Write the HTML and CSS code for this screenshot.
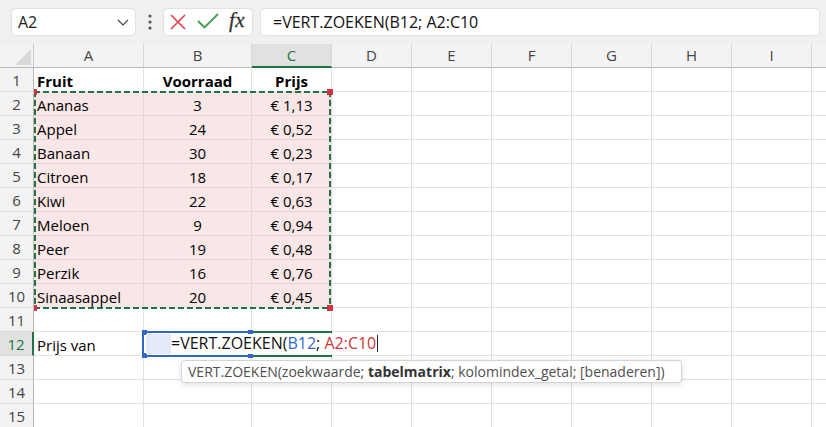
FILE: index.html
```html
<!DOCTYPE html>
<html>
<head>
<meta charset="utf-8">
<link rel="stylesheet" href="styles.css">
</head>
<body>
<div class="app">
  <div class="toolbar">
    <div class="namebox">
      <span class="nb-text">A2</span>
      <svg class="chev" width="12" height="7" viewBox="0 0 12 7"><polyline points="1,1 6,6 11,1" fill="none" stroke="#444" stroke-width="1.2"/></svg>
    </div>
    <svg class="dots" width="4" height="16" viewBox="0 0 4 16"><circle cx="2" cy="2" r="1.6" fill="#555"/><circle cx="2" cy="8" r="1.6" fill="#555"/><circle cx="2" cy="14" r="1.6" fill="#555"/></svg>
    <div class="fxbox">
      <svg class="ico-x" width="16" height="16" viewBox="0 0 16 16"><path d="M1 1 L15 15 M15 1 L1 15" stroke="#e3434b" stroke-width="1.7" fill="none"/></svg>
      <svg class="ico-ok" width="22" height="16" viewBox="0 0 22 16"><polyline points="1,8 7.5,14.5 21,1" fill="none" stroke="#3f9f4f" stroke-width="1.8"/></svg>
      <span class="fx">fx</span>
    </div>
    <div class="formula">=VERT.ZOEKEN(B12; A2:C10</div>
  </div>

  <div class="sheet">
    <div class="row hdr">
      <div class="corner"><svg width="16" height="16" viewBox="0 0 16 16"><polygon points="16,0 16,16 0,16" fill="#d9d9d9"/></svg></div>
      <div class="h ca">A</div><div class="h cb">B</div><div class="h cc sel">C</div>
      <div class="h c">D</div><div class="h c">E</div><div class="h c">F</div><div class="h c">G</div><div class="h c">H</div><div class="h c">I</div><div class="h c"></div>
    </div>

    <div class="row"><div class="rh">1</div><div class="cell ca bold">Fruit</div><div class="cell cb bold mid">Voorraad</div><div class="cell cc bold mid">Prijs</div><div class="cell c"></div><div class="cell c"></div><div class="cell c"></div><div class="cell c"></div><div class="cell c"></div><div class="cell c"></div><div class="cell c"></div></div>
    <div class="row"><div class="rh">2</div><div class="cell ca pk">Ananas</div><div class="cell cb pk mid">3</div><div class="cell cc pk mid">€ 1,13</div><div class="cell c"></div><div class="cell c"></div><div class="cell c"></div><div class="cell c"></div><div class="cell c"></div><div class="cell c"></div><div class="cell c"></div></div>
    <div class="row"><div class="rh">3</div><div class="cell ca pk">Appel</div><div class="cell cb pk mid">24</div><div class="cell cc pk mid">€ 0,52</div><div class="cell c"></div><div class="cell c"></div><div class="cell c"></div><div class="cell c"></div><div class="cell c"></div><div class="cell c"></div><div class="cell c"></div></div>
    <div class="row"><div class="rh">4</div><div class="cell ca pk">Banaan</div><div class="cell cb pk mid">30</div><div class="cell cc pk mid">€ 0,23</div><div class="cell c"></div><div class="cell c"></div><div class="cell c"></div><div class="cell c"></div><div class="cell c"></div><div class="cell c"></div><div class="cell c"></div></div>
    <div class="row"><div class="rh">5</div><div class="cell ca pk">Citroen</div><div class="cell cb pk mid">18</div><div class="cell cc pk mid">€ 0,17</div><div class="cell c"></div><div class="cell c"></div><div class="cell c"></div><div class="cell c"></div><div class="cell c"></div><div class="cell c"></div><div class="cell c"></div></div>
    <div class="row"><div class="rh">6</div><div class="cell ca pk">Kiwi</div><div class="cell cb pk mid">22</div><div class="cell cc pk mid">€ 0,63</div><div class="cell c"></div><div class="cell c"></div><div class="cell c"></div><div class="cell c"></div><div class="cell c"></div><div class="cell c"></div><div class="cell c"></div></div>
    <div class="row"><div class="rh">7</div><div class="cell ca pk">Meloen</div><div class="cell cb pk mid">9</div><div class="cell cc pk mid">€ 0,94</div><div class="cell c"></div><div class="cell c"></div><div class="cell c"></div><div class="cell c"></div><div class="cell c"></div><div class="cell c"></div><div class="cell c"></div></div>
    <div class="row"><div class="rh">8</div><div class="cell ca pk">Peer</div><div class="cell cb pk mid">19</div><div class="cell cc pk mid">€ 0,48</div><div class="cell c"></div><div class="cell c"></div><div class="cell c"></div><div class="cell c"></div><div class="cell c"></div><div class="cell c"></div><div class="cell c"></div></div>
    <div class="row"><div class="rh">9</div><div class="cell ca pk">Perzik</div><div class="cell cb pk mid">16</div><div class="cell cc pk mid">€ 0,76</div><div class="cell c"></div><div class="cell c"></div><div class="cell c"></div><div class="cell c"></div><div class="cell c"></div><div class="cell c"></div><div class="cell c"></div></div>
    <div class="row"><div class="rh">10</div><div class="cell ca pk">Sinaasappel</div><div class="cell cb pk mid">20</div><div class="cell cc pk mid">€ 0,45</div><div class="cell c"></div><div class="cell c"></div><div class="cell c"></div><div class="cell c"></div><div class="cell c"></div><div class="cell c"></div><div class="cell c"></div></div>
    <div class="row"><div class="rh">11</div><div class="cell ca"></div><div class="cell cb"></div><div class="cell cc"></div><div class="cell c"></div><div class="cell c"></div><div class="cell c"></div><div class="cell c"></div><div class="cell c"></div><div class="cell c"></div><div class="cell c"></div></div>
    <div class="row"><div class="rh rsel">12</div><div class="cell ca">Prijs van</div><div class="cell cb"></div><div class="cell cc"></div><div class="cell c"></div><div class="cell c"></div><div class="cell c"></div><div class="cell c"></div><div class="cell c"></div><div class="cell c"></div><div class="cell c"></div></div>
    <div class="row"><div class="rh">13</div><div class="cell ca"></div><div class="cell cb"></div><div class="cell cc"></div><div class="cell c"></div><div class="cell c"></div><div class="cell c"></div><div class="cell c"></div><div class="cell c"></div><div class="cell c"></div><div class="cell c"></div></div>
    <div class="row"><div class="rh">14</div><div class="cell ca"></div><div class="cell cb"></div><div class="cell cc"></div><div class="cell c"></div><div class="cell c"></div><div class="cell c"></div><div class="cell c"></div><div class="cell c"></div><div class="cell c"></div><div class="cell c"></div></div>
    <div class="row"><div class="rh">15</div><div class="cell ca"></div><div class="cell cb"></div><div class="cell cc"></div><div class="cell c"></div><div class="cell c"></div><div class="cell c"></div><div class="cell c"></div><div class="cell c"></div><div class="cell c"></div><div class="cell c"></div></div>

    <!-- overlays -->
    <div class="ants"></div>
    <div class="rq rq-tl"></div><div class="rq rq-tr"></div><div class="rq rq-bl"></div><div class="rq rq-br"></div>

    <div class="edit-green"></div>
    <div class="bluebox"></div>
    <div class="bq bq-tl"></div><div class="bq bq-tr"></div><div class="bq bq-bl"></div><div class="bq bq-br"></div>
    <div class="lav"></div>
    <div class="editor">=VERT.ZOEKEN(<span class="ref-b">B12</span>; <span class="ref-r">A2:C10</span><span class="caret"></span></div>

    <div class="tip">VERT.ZOEKEN(zoekwaarde; <b>tabelmatrix</b>; kolomindex_getal; [benaderen])</div>
  </div>
</div>
</body>
</html>
```

FILE: styles.css
```css
* { box-sizing: border-box; }
html, body { margin: 0; padding: 0; }
body {
  width: 826px;
  height: 427px;
  overflow: hidden;
  background: #ffffff;
  font-family: "Open Sans", "Noto Sans", sans-serif;
  color: #000;
}
.app { width: 826px; height: 427px; overflow: hidden; }

/* toolbar */
.toolbar {
  height: 44px;
  background: #f0f0f0;
  display: flex;
  align-items: flex-start;
  padding-top: 8px;
  padding-left: 11px;
}
.namebox {
  width: 125px;
  height: 28px;
  background: #fff;
  border: 1px solid #e2e2e2;
  border-radius: 5px;
  display: flex;
  align-items: center;
  justify-content: space-between;
  padding: 0 6px 0 6px;
}
.nb-text { font-size: 16px; color: #222; }
.chev { margin-top: 1px; }
.dots { margin: 6px 0 0 12px; }
.fxbox {
  margin-left: 11px;
  width: 90px;
  height: 28px;
  background: #fff;
  border: 1px solid #e2e2e2;
  border-radius: 5px;
  display: flex;
  align-items: center;
  padding-left: 6px;
}
.ico-ok { margin-left: 11px; margin-top: -3px; }
.fx {
  font-family: "Liberation Serif", serif;
  font-style: italic;
  font-size: 21px;
  color: #333;
  margin-left: 10px;
  margin-top: -3px;
  letter-spacing: 0.5px;
  -webkit-text-stroke: 0.3px #333;
}
.formula {
  margin-left: 7px;
  width: 560px;
  height: 28px;
  background: #fff;
  border: 1px solid #e2e2e2;
  border-radius: 5px;
  font-size: 16px;
  line-height: 26px;
  padding-left: 12px;
  color: #111;
}

/* sheet */
.sheet { position: relative; height: 383px; overflow: hidden; width: 826px; }
.row { display: flex; height: 24px; width: 900px; }
.hdr { background: #f3f3f3; }
.corner {
  width: 34px; height: 24px;
  background: #f3f3f3;
  border-right: 1px solid #c8c8c8;
  border-bottom: 1px solid #b9b9b9;
  display: flex; align-items: flex-end; justify-content: flex-end;
  padding: 0 2px 2px 0;
}
.ca { width: 110px; flex: none; }
.cb { width: 108px; flex: none; }
.cc { width: 80px; flex: none; }
.c  { width: 80px; flex: none; }
.h {
  height: 24px;
  background: #f3f3f3;
  border-right: 1px solid #d6d6d6;
  border-bottom: 1px solid #b9b9b9;
  text-align: center;
  font-size: 15px;
  line-height: 23px;
  color: #444;
}
.h.sel {
  background: #e1e1e1;
  color: #217346;
  border-bottom: 2px solid #217346;
}
.rh {
  width: 34px; flex: none;
  height: 24px;
  background: #f3f3f3;
  border-right: 1px solid #b9b9b9;
  border-bottom: 1px solid #dadada;
  text-align: center;
  font-size: 15px;
  line-height: 24px;
  color: #444;
}
.rh.rsel {
  background: #e1e1e1;
  color: #217346;
  border-right: 2px solid #217346;
}
.cell {
  height: 24px;
  border-right: 1px solid #e1e1e1;
  border-bottom: 1px solid #e1e1e1;
  font-size: 15px;
  line-height: 24px;
  padding: 1px 3px 0 3px;
  white-space: nowrap;
  overflow: visible;
}
.cell.bold { font-weight: 700; }
.cell.mid { text-align: center; }
.cell.pk { background: #f9e7e7; border-color: #e3d6d6; }

/* marching ants around A2:C10 */
.ants {
  position: absolute;
  left: 34px; top: 47px;
  width: 297px; height: 218px;
  background:
    repeating-linear-gradient(90deg, #217346 0 6px, transparent 6px 9px) left top / 100% 2px no-repeat,
    repeating-linear-gradient(90deg, #217346 0 6px, transparent 6px 9px) left bottom / 100% 2px no-repeat,
    repeating-linear-gradient(180deg, #217346 0 6px, transparent 6px 9px) left top / 2px 100% no-repeat,
    repeating-linear-gradient(180deg, #217346 0 6px, transparent 6px 9px) right top / 2px 100% no-repeat;
}
.rq { position: absolute; width: 6px; height: 6px; background: #cf3340; }
.rq-tl { left: 34px; top: 45px; width: 3px; }
.rq-bl { left: 34px; top: 261px; width: 3px; }
.rq-tr { left: 327px; top: 45px; }
.rq-br { left: 327px; top: 261px; }

/* editing cell */
.edit-green {
  position: absolute;
  left: 252px; top: 287px;
  width: 80px; height: 26px;
  border-top: 2px solid #217346;
  border-bottom: 2px solid #217346;
}
.bluebox {
  position: absolute;
  left: 142px; top: 287px;
  width: 111px; height: 26px;
  border: 2px solid #3267c9;
}
.bq { position: absolute; width: 5px; height: 5px; background: #3267c9; }
.bq-tl { left: 142px; top: 286px; }
.bq-tr { left: 248px; top: 286px; }
.bq-bl { left: 142px; top: 309px; }
.bq-br { left: 248px; top: 309px; }
.lav {
  position: absolute;
  left: 146px; top: 290px;
  width: 25px; height: 20px;
  background: #e5eaf8;
}
.editor {
  position: absolute;
  left: 171px; top: 290px;
  height: 20px;
  padding-right: 4px;
  background: #fff;
  font-size: 16px;
  line-height: 19px;
  white-space: pre;
  color: #111;
}
.ref-b { color: #2f6bc6; }
.ref-r { color: #d13438; }
.caret { display: inline-block; width: 1px; height: 17px; background: #222; margin-left: 1px; vertical-align: -3px; }

/* tooltip */
.tip {
  position: absolute;
  left: 181px; top: 316px;
  width: 501px; height: 23px;
  background: #fff;
  border: 1px solid #d4d4d4;
  border-radius: 4px;
  box-shadow: 0 2px 6px rgba(0,0,0,0.12);
  font-size: 14px;
  line-height: 21px;
  padding-left: 6px;
  color: #505050;
  white-space: nowrap;
}
.tip b { color: #333; font-weight: 700; }
```
